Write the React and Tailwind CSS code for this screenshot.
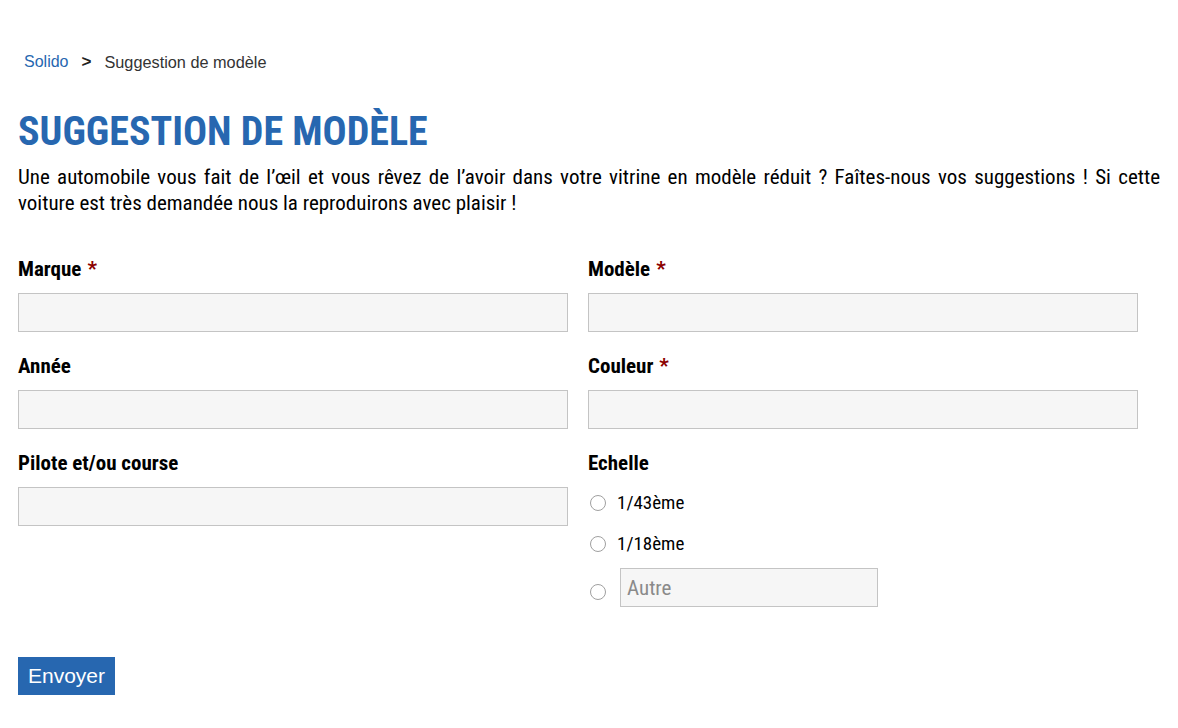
import React from 'react';

const cond = { fontFamily: '"Roboto Condensed", "Liberation Sans Narrow", Roboto, sans-serif' };

function Label({ children, required }) {
  return (
    <div className="text-[21px] font-bold text-black leading-[24px] h-[24px]" style={cond}>
      {children}
      {required && <span className="text-[#8b0000] ml-[6px]">*</span>}
    </div>
  );
}

function Field({ label, required }) {
  return (
    <div className="flex flex-col">
      <Label required={required}>{label}</Label>
      <input type="text" className="mt-[12px] w-[550px] h-[39px] bg-[#f6f6f6] border border-[#c4c4c4] outline-none" />
    </div>
  );
}

function Circle({ className = '' }) {
  return <span className={`w-[16px] h-[16px] rounded-full border border-[#a0a0a0] bg-white ml-[2px] shrink-0 ${className}`} />;
}

function Radio({ children }) {
  return (
    <div className="flex items-center gap-[11px]">
      <Circle />
      {children}
    </div>
  );
}

export default function App() {
  return (
    <div className="bg-white w-[1178px] h-[728px] px-[18px] pt-[52px]">
      <div className="flex items-center text-[16px] leading-[20px] pl-[6px]" style={{ fontFamily: '"Liberation Sans", Arial, sans-serif' }}>
        <span className="text-[#2767b0]">Solido</span>
        <span className="text-[#222] font-bold text-[17px] ml-[13px] mr-[13px]">&gt;</span>
        <span className="text-[#333] text-[16.3px]">Suggestion de modèle</span>
      </div>

      <h1 className="mt-[36px] text-[40px] font-bold leading-[48px] text-[#2767b0] uppercase" style={cond}>Suggestion de modèle</h1>

      <div className="mt-[8px] w-[1142px] text-[21px] leading-[26px] text-black" style={cond}>
        <p className="text-justify [text-align-last:justify]">
          Une automobile vous fait de l’œil et vous rêvez de l’avoir dans votre vitrine en modèle réduit ? Faîtes-nous vos suggestions ! Si cette
        </p>
        <p>voiture est très demandée nous la reproduirons avec plaisir !</p>
      </div>

      <div className="mt-[41px] grid grid-cols-[570px_570px] gap-y-[22px]">
        <Field label="Marque" required />
        <Field label="Modèle" required />
        <Field label="Année" />
        <Field label="Couleur" required />
        <Field label="Pilote et/ou course" />
        <div className="flex flex-col">
          <Label>Echelle</Label>
          <div className="mt-[16px] flex flex-col text-[19px] text-black leading-[24px]" style={cond}>
            <Radio><span>1/43ème</span></Radio>
            <div className="mt-[17px]"><Radio><span>1/18ème</span></Radio></div>
            <div className="mt-[12px] flex items-end gap-[14px]">
              <Circle className="mb-[7px]" />
              <div className="w-[258px] h-[39px] bg-[#f6f6f6] border border-[#c4c4c4] flex items-center px-[6px] text-[21px] text-[#8a8a8a]">Autre</div>
            </div>
          </div>
        </div>
      </div>

      <button className="mt-[50px] h-[38px] px-[10px] bg-[#2767b0] text-white text-[21px] leading-[38px]" style={{ fontFamily: '"Liberation Sans", Arial, sans-serif' }}>Envoyer</button>
    </div>
  );
}
